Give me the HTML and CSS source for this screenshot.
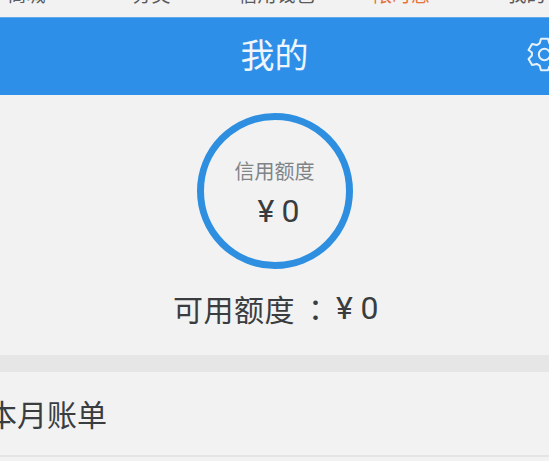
FILE: index.html
```html
<!DOCTYPE html>
<html lang="zh-CN">
<head>
<meta charset="utf-8">
<title>我的</title>
<link rel="stylesheet" href="styles.css">
</head>
<body>
<div class="page">
  <nav class="tabs">
    <span class="tab">商城</span>
    <span class="tab">分类</span>
    <span class="tab">信用钱包</span>
    <span class="tab tab-active">限时惠</span>
    <span class="tab">我的</span>
  </nav>
  <header class="topbar">
    <h1 class="title">我的</h1>
    <svg class="gear" viewBox="0 0 40 40" fill="none" stroke="#e6f1fb" stroke-width="2.300" stroke-linejoin="round">
      <path d="M16 2h8l1.500 5.200 3.400 2 5.300-1.300 4 7-3.800 3.900v3.400l3.800 3.900-4 7-5.300-1.300-3.400 2L24 38h-8l-1.500-5.200-3.400-2-5.300 1.300-4-7 3.800-3.900v-3.400L1.800 14.900l4-7 5.300 1.300 3.400-2z"/>
      <circle cx="20" cy="20" r="6.500"/>
    </svg>
  </header>
  <section class="credit">
    <div class="ring">
      <span class="ring-label">信用额度</span>
      <span class="ring-value"><span class="yen">¥</span>0</span>
    </div>
    <p class="available">可用额度<span class="colon">：</span><span class="amount"><span class="yen">¥</span>0</span></p>
  </section>
  <div class="divider"></div>
  <div class="row">本月账单</div>
</div>
</body>
</html>
```

FILE: styles.css
```css
* { box-sizing: border-box; }
html, body { margin: 0; height: 100%; }
body { background: #f2f2f2; overflow: hidden; font-family: "Noto Sans CJK SC", "Roboto", sans-serif; }
.page { width: 549px; height: 461px; overflow: hidden; display: flex; flex-direction: column; }
.tabs { flex: none; height: 17px; display: grid; grid-template-columns: repeat(5, 125px); margin-left: -36px; color: #5a5a5a; font-size: 19px; line-height: 20px; white-space: nowrap; align-content: end; padding-bottom: 13px; text-align: center; }
.tab-active { color: #e8703a; }
.topbar { flex: none; height: 78px; background: #2e8fe8; border-top: 1px solid #63aaea; display: flex; align-items: center; justify-content: center; position: relative; padding-bottom: 5px; }
.title { margin: 0; font-size: 34px; font-weight: 400; color: #eef5fb; line-height: 1; }
.gear { position: absolute; left: 527px; top: 19px; width: 35px; height: 35px; }
.credit { flex: none; height: 260px; display: flex; flex-direction: column; align-items: center; padding-top: 18px; }
.ring { width: 156px; height: 156px; border: 7px solid #2e8fe0; border-radius: 50%; display: flex; flex-direction: column; align-items: center; padding-top: 37px; }
.ring-label { font-size: 20px; line-height: 28px; color: #7f8488; }
.ring-value { font-family: "Roboto", sans-serif; font-size: 32px; line-height: 40px; margin-top: 6px; padding-left: 8px; color: #3a3d40; }
.yen { margin-right: 7px; }
.available { margin: 19px 0 0; padding-left: 3px; font-size: 30px; line-height: 40px; color: #3a3d40; display: flex; letter-spacing: 0.500px; }
.colon { font-family: "Noto Sans CJK TC", sans-serif; width: 41px; text-align: center; letter-spacing: 0; }
.amount { font-family: "Roboto", sans-serif; font-size: 32px; }
.divider { flex: none; height: 17px; background: #e6e6e6; }
.row { flex: none; height: 85px; margin-left: -13px; border-bottom: 2px solid #e4e4e4; display: flex; align-items: center; padding-bottom: 2px; font-size: 30px; color: #3a3d40; }
```
